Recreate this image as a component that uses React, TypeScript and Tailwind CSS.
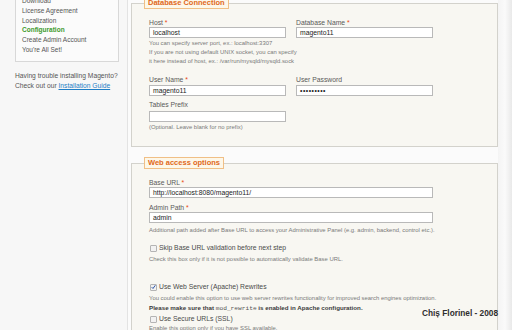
import React from "react";

const Req = () => <span className="text-[#e8470f]"> *</span>;

function Label({ children, req }: { children: React.ReactNode; req?: boolean }) {
  return (
    <div className="text-[6.8px] leading-[9px] text-[#5a5a5a] whitespace-nowrap">
      {children}
      {req && <Req />}
    </div>
  );
}

function Field({ value, w = "w-[137px]", mono }: { value: string; w?: string; mono?: boolean }) {
  return (
    <div
      className={`${w} h-[11px] border border-[#b9b9b9] bg-white pl-[3px] text-[6.8px] leading-[9px] text-[#222] whitespace-nowrap overflow-hidden ${mono ? "tracking-[0.5px]" : ""}`}
    >
      {value}
    </div>
  );
}

function Help({ children, className = "" }: { children: React.ReactNode; className?: string }) {
  return (
    <div className={`text-[5.9px] leading-[9px] text-[#7a7a7a] whitespace-nowrap ${className}`}>{children}</div>
  );
}

function Check({ checked, label, className = "" }: { checked?: boolean; label: string; className?: string }) {
  return (
    <div className={`flex items-center h-[10px] gap-[2px] pl-[1px] ${className}`}>
      <div className="w-[7px] h-[7px] border border-[#b4b4b4] bg-[#f2f2f2] rounded-[1px] flex items-center justify-center shrink-0">
        {checked && (
          <svg width="6" height="6" viewBox="0 0 6 6">
            <path d="M0.8 3.2 L2.4 4.8 L5.2 0.9" stroke="#2c55a8" strokeWidth="1.2" fill="none" />
          </svg>
        )}
      </div>
      <span className="text-[6.8px] leading-[10px] text-[#4a4a4a] whitespace-nowrap">{label}</span>
    </div>
  );
}

function Legend({ children }: { children: React.ReactNode }) {
  return (
    <legend className="h-[12px] px-[3px] border border-[#f0bf86] bg-[#fdf7e9] text-[7.5px] leading-[10px] font-bold text-[#e0681a] whitespace-nowrap">
      {children}
    </legend>
  );
}

export default function App() {
  return (
    <div className="relative w-[512px] h-[330px] overflow-hidden flex bg-[#f9f9f9] font-['Liberation_Sans',Arial,sans-serif]">
      {/* Sidebar */}
      <aside className="w-[128px] shrink-0 border-r border-[#e3e3e3] bg-[#f7f7f7]">
        <div className="mt-[-8px] ml-[15px] w-[104px] border border-[#d8d8d8] bg-[#fbfbfb] pt-[3px] pb-[6px] pl-[6px] text-[6.5px] leading-[9.8px] text-[#555]">
          <div>Download</div>
          <div>License Agreement</div>
          <div>Localization</div>
          <div className="text-[#3c9a2c] font-bold">Configuration</div>
          <div>Create Admin Account</div>
          <div>You're All Set!</div>
        </div>
        <div className="mt-[9px] ml-[15px] text-[6.7px] leading-[10px] text-[#555] whitespace-nowrap">
          <div>Having trouble installing Magento?</div>
          <div>
            Check out our <span className="text-[#1f7ec6] underline">Installation Guide</span>
          </div>
        </div>
      </aside>

      {/* Main */}
      <main className="w-[370px] shrink-0 pl-[3px] bg-[#fbfbfb]">
        <fieldset className="mt-[-3px] border border-[#d3d2cc] bg-[#f8f7f2] pl-[12px] pb-[14px]">
          <Legend>Database Connection</Legend>
          <div className="pl-[5px] pt-[9px]">
            <div className="flex gap-[10px]">
              <div className="w-[137px]">
                <Label req>Host</Label>
                <Field value="localhost" />
              </div>
              <div className="w-[137px]">
                <Label req>Database Name</Label>
                <Field value="magento11" />
              </div>
            </div>
            <div className="mt-[1px]">
              <Help>You can specify server port, ex.: localhost:3307</Help>
              <Help>If you are not using default UNIX socket, you can specify</Help>
              <Help>it here instead of host, ex.: /var/run/mysqld/mysqld.sock</Help>
            </div>
            <div className="flex gap-[10px] mt-[9px]">
              <div className="w-[137px]">
                <Label req>User Name</Label>
                <div className="mt-[1px]">
                  <Field value="magento11" />
                </div>
              </div>
              <div className="w-[137px]">
                <Label>User Password</Label>
                <div className="mt-[1px]">
                  <Field value="•••••••••" mono />
                </div>
              </div>
            </div>
            <div className="mt-[4px]">
              <Label>Tables Prefix</Label>
              <div className="mt-[2px]">
                <Field value="" />
              </div>
            </div>
            <Help className="mt-[1px]">(Optional. Leave blank for no prefix)</Help>
          </div>
        </fieldset>

        <fieldset className="mt-[10px] border border-[#d3d2cc] bg-[#f8f7f2] pl-[12px] pb-[20px]">
          <Legend>Web access options</Legend>
          <div className="pl-[5px] pt-[9px]">
            <Label req>Base URL</Label>
            <Field value="http://localhost:8080/magento11/" w="w-[284px]" />
            <div className="mt-[5px]">
              <Label req>Admin Path</Label>
              <Field value="admin" w="w-[284px]" />
            </div>
            <Help className="mt-[3px]">
              Additional path added after Base URL to access your Administrative Panel (e.g. admin, backend, control etc.).
            </Help>
            <Check className="mt-[8px]" label="Skip Base URL validation before next step" />
            <Help className="mt-[2px]">Check this box only if it is not possible to automatically validate Base URL.</Help>
            <Check className="mt-[18px]" checked label="Use Web Server (Apache) Rewrites" />
            <Help className="mt-[2px]">
              You could enable this option to use web server rewrites functionality for improved search engines optimization.
            </Help>
            <div className="text-[6.2px] leading-[9px] font-bold text-[#3a3a3a] whitespace-nowrap">
              Please make sure that{" "}
              <span className="font-['Liberation_Mono',monospace] font-normal text-[#555]">mod_rewrite</span> is enabled in Apache
              configuration.
            </div>
            <Check className="mt-[1px]" label="Use Secure URLs (SSL)" />
            <Help>Enable this option only if you have SSL available.</Help>
          </div>
        </fieldset>
      </main>

      {/* Right edge */}
      <div className="flex-1 bg-gradient-to-r from-[#f4f4f4] via-[#fafafa] to-[#e9e9e9]" />

      {/* Watermark */}
      <div className="absolute left-[422px] top-[308px] text-[8.3px] leading-[10px] font-bold text-[#2e2e2e] whitespace-nowrap">
        Chiș Florinel - 2008
      </div>
    </div>
  );
}
